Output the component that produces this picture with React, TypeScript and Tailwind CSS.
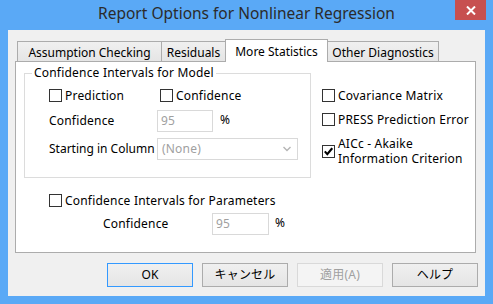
import React from "react";

const font = { fontFamily: '"Noto Sans", "Noto Sans CJK JP", sans-serif' };

function Box({ checked = false }: { checked?: boolean }) {
  return (
    <span className="w-[13px] h-[13px] border border-[#333] bg-white flex items-center justify-center shrink-0">
      {checked && (
        <svg width="9" height="9" viewBox="0 0 9 9">
          <path d="M0.8 4.4 L3.3 7.2 L8.2 1.2" fill="none" stroke="#000" strokeWidth="2.1" />
        </svg>
      )}
    </span>
  );
}

function Check({ label, checked, className = "" }: { label: React.ReactNode; checked?: boolean; className?: string }) {
  return (
    <div className={"flex items-center gap-[3px] " + className}>
      <Box checked={checked} />
      <div className="leading-[15px]">{label}</div>
    </div>
  );
}

function Tab({ label, w, active }: { label: string; w: string; active?: boolean }) {
  if (active)
    return (
      <div className={`${w} h-[23px] -mb-px -ml-px bg-white border border-b-0 border-[#acacac] flex items-start justify-center pt-[3px] relative z-10`}>
        {label}
      </div>
    );
  return (
    <div className={`${w} h-[20px] -ml-px first:ml-0 border border-b-0 border-[#acacac] bg-gradient-to-b from-[#f0f0f0] to-[#e5e5e5] flex items-center justify-center pt-[2px]`}>
      {label}
    </div>
  );
}

function Btn({ label, kind }: { label: string; kind?: "default" | "disabled" }) {
  const border =
    kind === "default" ? "border-[#3399ff]" : kind === "disabled" ? "border-[#d9d9d9]" : "border-[#acacac]";
  const bg = kind === "disabled" ? "bg-[#f4f4f4] text-[#a0a0a0]" : "bg-gradient-to-b from-[#f0f0f0] to-[#e5e5e5] text-black";
  return (
    <div className={`w-[86px] h-[24px] border ${border} ${bg} flex items-center justify-center`}>{label}</div>
  );
}

export default function App() {
  return (
    <div className="w-[493px] h-[304px] bg-[#5aa9f6] flex flex-col text-[12px] tracking-[0.2px] text-black" style={font}>
      <div className="h-[30px] relative flex items-center justify-center pb-[2px]">
        <span className="text-[15.5px] tracking-normal text-[#2b2b2b]">Report Options for Nonlinear Regression</span>
        <div className="absolute top-0 right-[7px] w-[31px] h-[20px] bg-[#c75050] flex items-center justify-center">
          <svg width="10" height="9" viewBox="0 0 10 9">
            <path d="M1 0.5 L9 8.5 M9 0.5 L1 8.5" stroke="#fff" strokeWidth="2" />
          </svg>
        </div>
      </div>
      <div className="mx-[8px] mb-[8px] flex-1 bg-[#f0f0f0] pt-[9px] pl-[7px] pr-[7px] flex flex-col">
        <div className="flex items-end h-[22px] ml-[2px] tracking-normal">
          <Tab label="Assumption Checking" w="w-[145px]" />
          <Tab label="Residuals" w="w-[65px]" />
          <Tab label="More Statistics" w="w-[103px]" active />
          <Tab label="Other Diagnostics" w="w-[112px]" />
        </div>
        <div className="w-[461px] h-[192px] bg-white border border-[#acacac] flex flex-col">
          <div className="flex">
            <fieldset className="ml-[8px] mt-[3px] w-[287px] h-[113px] border border-[#dcdcdc] m-0 p-0 min-w-0">
              <legend className="ml-[7px] px-[2px] leading-[16px]">Confidence Intervals for Model</legend>
              <div className="flex mt-[6px] pl-[24px] h-[16px] items-center">
                <Check label="Prediction" className="w-[111px]" />
                <Check label="Confidence" />
              </div>
              <div className="flex mt-[7px] pl-[24px] items-center">
                <span className="w-[108px]">Confidence</span>
                <div className="w-[56px] h-[22px] border border-[#d9d9d9] text-[#a0a0a0] flex items-center pl-[3px]">95</div>
                <span className="ml-[7px] -mt-[2px]">%</span>
              </div>
              <div className="flex mt-[6px] pl-[24px] items-center">
                <span className="w-[108px] whitespace-nowrap tracking-normal">Starting in Column</span>
                <div className="w-[141px] h-[22px] border border-[#d9d9d9] text-[#a0a0a0] flex items-center justify-between pl-[4px] pr-[6px]">
                  <span>(None)</span>
                  <svg width="8" height="6" viewBox="0 0 8 6">
                    <path d="M0.5 1 L4 4.5 L7.5 1" fill="none" stroke="#b5b5b5" strokeWidth="1.4" />
                  </svg>
                </div>
              </div>
            </fieldset>
            <div className="ml-[11px] mt-[25px] flex flex-col">
              <Check label="Covariance Matrix" className="h-[16px]" />
              <Check label="PRESS Prediction Error" className="h-[16px] mt-[8px]" />
              <Check
                checked
                className="mt-[9px]"
                label={
                  <>
                    <div>AICc - Akaike</div>
                    <div>Information Criterion</div>
                  </>
                }
              />
            </div>
          </div>
          <Check label="Confidence Intervals for Parameters" className="ml-[33px] mt-[14px] h-[16px]" />
          <div className="flex items-center ml-[87px] mt-[5px]">
            <span className="w-[109px]">Confidence</span>
            <div className="w-[57px] h-[22px] border border-[#d9d9d9] text-[#a0a0a0] flex items-center pl-[3px]">95</div>
            <span className="ml-[6px] -mt-[2px]">%</span>
          </div>
        </div>
        <div className="flex justify-end gap-[9px] mt-[10px]">
          <Btn label="OK" kind="default" />
          <Btn label="キャンセル" />
          <Btn label="適用(A)" kind="disabled" />
          <Btn label="ヘルプ" />
        </div>
      </div>
    </div>
  );
}
